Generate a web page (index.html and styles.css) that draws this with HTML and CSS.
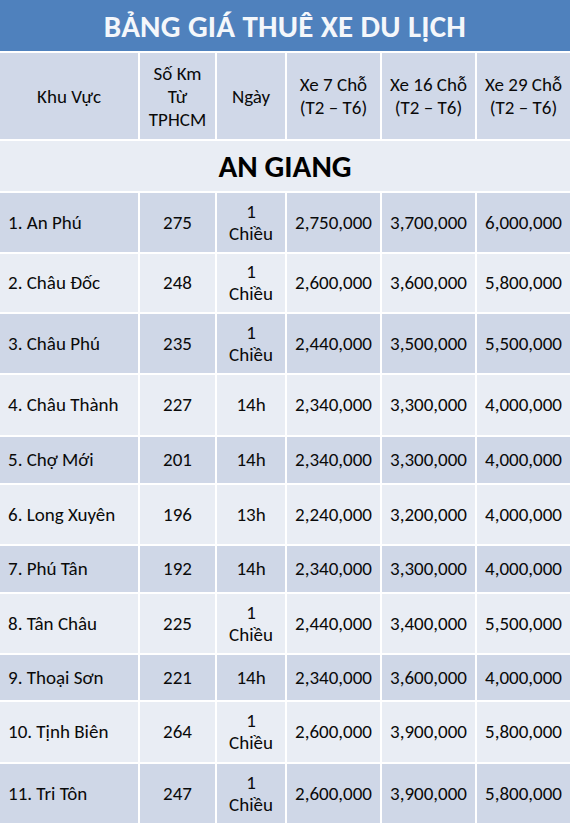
FILE: index.html
```html
<!DOCTYPE html>
<html lang="vi">
<head>
<meta charset="utf-8">
<title>Bảng giá thuê xe du lịch</title>
<link rel="stylesheet" href="styles.css">
</head>
<body>
<div class="sheet">
  <div class="title">BẢNG GIÁ THUÊ XE DU LỊCH</div>

  <div class="c hd first">Khu Vực</div>
  <div class="c hd">Số Km<br>Từ<br>TPHCM</div>
  <div class="c hd">Ngày</div>
  <div class="c hd">Xe 7 Chỗ<br>(T2 – T6)</div>
  <div class="c hd">Xe 16 Chỗ<br>(T2 – T6)</div>
  <div class="c hd">Xe 29 Chỗ<br>(T2 – T6)</div>

  <div class="region">AN GIANG</div>

  <div class="c dk name">1. An Phú</div><div class="c dk">275</div><div class="c dk">1<br>Chiều</div><div class="c dk">2,750,000</div><div class="c dk">3,700,000</div><div class="c dk">6,000,000</div>
  <div class="c lt name">2. Châu Đốc</div><div class="c lt">248</div><div class="c lt">1<br>Chiều</div><div class="c lt">2,600,000</div><div class="c lt">3,600,000</div><div class="c lt">5,800,000</div>
  <div class="c dk name">3. Châu Phú</div><div class="c dk">235</div><div class="c dk">1<br>Chiều</div><div class="c dk">2,440,000</div><div class="c dk">3,500,000</div><div class="c dk">5,500,000</div>
  <div class="c lt name">4. Châu Thành</div><div class="c lt">227</div><div class="c lt">14h</div><div class="c lt">2,340,000</div><div class="c lt">3,300,000</div><div class="c lt">4,000,000</div>
  <div class="c dk name">5. Chợ Mới</div><div class="c dk">201</div><div class="c dk">14h</div><div class="c dk">2,340,000</div><div class="c dk">3,300,000</div><div class="c dk">4,000,000</div>
  <div class="c lt name">6. Long Xuyên</div><div class="c lt">196</div><div class="c lt">13h</div><div class="c lt">2,240,000</div><div class="c lt">3,200,000</div><div class="c lt">4,000,000</div>
  <div class="c dk name">7. Phú Tân</div><div class="c dk">192</div><div class="c dk">14h</div><div class="c dk">2,340,000</div><div class="c dk">3,300,000</div><div class="c dk">4,000,000</div>
  <div class="c lt name">8. Tân Châu</div><div class="c lt">225</div><div class="c lt">1<br>Chiều</div><div class="c lt">2,440,000</div><div class="c lt">3,400,000</div><div class="c lt">5,500,000</div>
  <div class="c dk name">9. Thoại Sơn</div><div class="c dk">221</div><div class="c dk">14h</div><div class="c dk">2,340,000</div><div class="c dk">3,600,000</div><div class="c dk">4,000,000</div>
  <div class="c lt name">10. Tịnh Biên</div><div class="c lt">264</div><div class="c lt">1<br>Chiều</div><div class="c lt">2,600,000</div><div class="c lt">3,900,000</div><div class="c lt">5,800,000</div>
  <div class="c dk name">11. Tri Tôn</div><div class="c dk">247</div><div class="c dk">1<br>Chiều</div><div class="c dk">2,600,000</div><div class="c dk">3,900,000</div><div class="c dk">5,800,000</div>
</div>
</body>
</html>
```
FILE: styles.css
```css
html, body {
  margin: 0;
  padding: 0;
  background: #ffffff;
}
body {
  font-family: Carlito, Lato, "Open Sans", sans-serif;
  color: #0a0a0a;
}
.sheet {
  width: 570px;
  height: 823px;
  display: grid;
  grid-template-columns: 138px 75px 68px 93px 93px 93px;
  grid-template-rows: 51px 86px 50px 59px 58px 59px 60px 46px 59px 46px 59px 45px 60px 59px;
  gap: 2px;
  background: #ffffff;
  overflow: hidden;
}
.title {
  grid-column: 1 / -1;
  background: #4f81bd;
  color: #f4f7fb;
  font-weight: 700;
  font-size: 31px;
  display: flex;
  align-items: center;
  justify-content: center;
  letter-spacing: 0.2px;
  padding-top: 1px;
}
.region {
  grid-column: 1 / -1;
  background: #e9edf4;
  color: #000000;
  font-weight: 700;
  font-size: 31px;
  display: flex;
  align-items: center;
  justify-content: center;
}
.c {
  display: flex;
  align-items: center;
  justify-content: center;
  text-align: center;
  font-size: 19px;
  line-height: 22px;
}
.hd {
  background: #d0d8e8;
  line-height: 23px;
}
.dk {
  background: #cfd7e7;
}
.lt {
  background: #e9edf4;
}
.name {
  justify-content: flex-start;
  text-align: left;
  padding-left: 8px;
}
```
